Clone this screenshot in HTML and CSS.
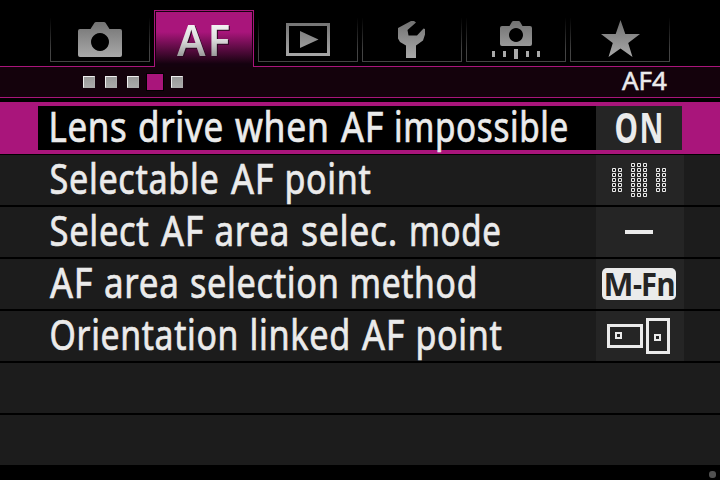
FILE: index.html
```html
<!DOCTYPE html>
<html lang="en">
<head>
<meta charset="utf-8">
<title>AF4</title>
<link rel="stylesheet" href="styles.css">
</head>
<body>
<svg width="0" height="0" class="defs">
  <defs>
    <linearGradient id="metal" gradientUnits="userSpaceOnUse" x1="0" y1="20" x2="0" y2="58"><stop offset="0" stop-color="#707070"/><stop offset="1" stop-color="#aaa"/></linearGradient>
    <linearGradient id="silver" gradientUnits="userSpaceOnUse" x1="0" y1="24" x2="0" y2="56"><stop offset="0" stop-color="#f4f4f4"/><stop offset=".5" stop-color="#dcdcdc"/><stop offset="1" stop-color="#999"/></linearGradient>
    <pattern id="pts" width="6" height="5" patternUnits="userSpaceOnUse"><path d="M.5.5h3v3h-3z" fill="none" stroke="#ebebeb"/></pattern>
  </defs>
</svg>
<main class="screen">
  <nav class="tabs">
    <div class="tab"><svg viewBox="50 0 100 62"><path fill="url(#metal)" fill-rule="evenodd" d="M80 29h10.500l4-6.200q.6-.8 1.500-.8h8q.9 0 1.500.8l4 6.200h10.500q2 0 2 2v24q0 2-2 2h-40q-2 0-2-2v-24q0-2 2-2zM100 33a9 9 0 1 0 .01 0z"/></svg></div>
    <div class="tab active"><svg viewBox="156 12 97 54"><text class="af" y="56"><tspan x="177" textLength="55.500" lengthAdjust="spacingAndGlyphs">AF</tspan></text></svg></div>
    <div class="tab"><svg viewBox="258 0 100 62"><path fill="url(#metal)" fill-rule="evenodd" d="M286 23h44v33h-44zM289 26v27h38V26z"/><path fill="url(#metal)" d="M300 31l18.500 8.500L300 48z"/></svg></div>
    <div class="tab"><svg viewBox="362 0 100 62"><path fill="url(#metal)" d="M411 21h3l2 1.500-8.500 7.500 1 5.500h8.500l6.500-7 1.500.5v5.500l-2 6-7 5V58h-10V45.500l-6-3.500-2-3.500V28z"/></svg></div>
    <div class="tab"><svg viewBox="466 0 100 62"><path fill="url(#metal)" fill-rule="evenodd" d="M502 26h7.500l2.500-4.300q.5-.7 1.300-.7h5.400q.8 0 1.300.7l2.500 4.300h7.500q2 0 2 2v16q0 2-2 2h-28q-2 0-2-2V28q0-2 2-2zM516 28a7 7 0 1 0 .01 0z"/><path fill="#aaa" d="M492 51h3v6h-3zM503 51h3v6h-3zM514 49h4v10h-4zM526 51h3v6h-3zM537 51h3v6h-3z"/></svg></div>
    <div class="tab"><svg viewBox="570 0 100 62"><path fill="url(#metal)" d="M620.500 20l4.800 14H640l-11.800 9 4.300 14-12-8.500-12 8.500 4.300-14L601 34h14.700z"/></svg></div>
  </nav>
  <header class="pagebar">
    <div class="pages"><i></i><i></i><i></i><i class="current"></i><i></i></div>
    <svg class="pagename" viewBox="620 67 50 30"><text y="90"><tspan x="622" textLength="45" lengthAdjust="spacingAndGlyphs">AF4</tspan></text></svg>
  </header>
  <section class="menu">
    <div class="row selected">
      <svg class="label" viewBox="38 0 558 44"><text y="36"><tspan x="48.500" textLength="79" lengthAdjust="spacingAndGlyphs">Lens</tspan> <tspan x="138" textLength="86" lengthAdjust="spacingAndGlyphs">drive</tspan> <tspan x="235" textLength="94.500" lengthAdjust="spacingAndGlyphs">when</tspan> <tspan x="341" textLength="43" lengthAdjust="spacingAndGlyphs">AF</tspan> <tspan x="394" textLength="175" lengthAdjust="spacingAndGlyphs">impossible</tspan></text></svg>
      <div class="value"><svg viewBox="596 0 86 44"><text class="on" y="37"><tspan x="614.500" textLength="23.500" lengthAdjust="spacingAndGlyphs">O</tspan><tspan x="639.500" textLength="24" lengthAdjust="spacingAndGlyphs">N</tspan></text></svg></div>
    </div>
    <div class="row">
      <svg class="label" viewBox="38 0 558 50"><text y="39"><tspan x="49.500" textLength="170" lengthAdjust="spacingAndGlyphs">Selectable</tspan> <tspan x="231" textLength="43" lengthAdjust="spacingAndGlyphs">AF</tspan> <tspan x="284.500" textLength="87" lengthAdjust="spacingAndGlyphs">point</tspan></text></svg>
      <div class="value"><svg viewBox="596 0 88 50"><g fill="url(#pts)"><path transform="translate(612 13)" d="M0 0h11v25H0z"/><path transform="translate(631 8)" d="M0 0h17v35H0z"/><path transform="translate(656 13)" d="M0 0h11v25H0z"/></g></svg></div>
    </div>
    <div class="row">
      <svg class="label" viewBox="38 0 558 50"><text y="39"><tspan x="49.500" textLength="100" lengthAdjust="spacingAndGlyphs">Select</tspan> <tspan x="161" textLength="43" lengthAdjust="spacingAndGlyphs">AF</tspan> <tspan x="214.500" textLength="75.500" lengthAdjust="spacingAndGlyphs">area</tspan> <tspan x="301" textLength="97" lengthAdjust="spacingAndGlyphs">selec.</tspan> <tspan x="409" textLength="92.500" lengthAdjust="spacingAndGlyphs">mode</tspan></text></svg>
      <div class="value"><svg viewBox="596 0 88 50"><path class="ink" d="M625 23h28v4h-28z"/></svg></div>
    </div>
    <div class="row">
      <svg class="label" viewBox="38 0 558 50"><text y="39"><tspan x="50" textLength="43" lengthAdjust="spacingAndGlyphs">AF</tspan> <tspan x="104" textLength="75.500" lengthAdjust="spacingAndGlyphs">area</tspan> <tspan x="190" textLength="149.500" lengthAdjust="spacingAndGlyphs">selection</tspan> <tspan x="349.500" textLength="128.500" lengthAdjust="spacingAndGlyphs">method</tspan></text></svg>
      <div class="value"><svg viewBox="596 0 88 50"><rect class="ink" x="602" y="9" width="74" height="32" rx="5"/><text class="mfn" y="37"><tspan x="603.500" textLength="30" lengthAdjust="spacingAndGlyphs">M</tspan><tspan x="633" textLength="9" lengthAdjust="spacingAndGlyphs">-</tspan><tspan x="641" textLength="16" lengthAdjust="spacingAndGlyphs">F</tspan><tspan x="656.500" textLength="19" lengthAdjust="spacingAndGlyphs">n</tspan></text></svg></div>
    </div>
    <div class="row">
      <svg class="label" viewBox="38 0 558 50"><text y="39"><tspan x="49.500" textLength="189.500" lengthAdjust="spacingAndGlyphs">Orientation</tspan> <tspan x="249.500" textLength="101.500" lengthAdjust="spacingAndGlyphs">linked</tspan> <tspan x="362" textLength="43" lengthAdjust="spacingAndGlyphs">AF</tspan> <tspan x="415.500" textLength="87" lengthAdjust="spacingAndGlyphs">point</tspan></text></svg>
      <div class="value"><svg viewBox="596 0 88 50"><g fill="none" stroke="#ebebeb"><path stroke-width="3" d="M608.500 14.500h33v21h-33zM647.500 8.500h21v33h-21z"/><path stroke-width="2" d="M616 22h5v5h-5zM655 24h5v5h-5z"/></g></svg></div>
    </div>
    <div class="row"></div>
    <div class="row"></div>
  </section>
  <footer class="foot"><span class="dot"></span></footer>
</main>
</body>
</html>
```
FILE: styles.css
```css
* { box-sizing: border-box; }
body { margin: 0; background: #000; }
.defs { display: block; height: 0; }
.screen {
  width: 720px;
  height: 480px;
  background: #000;
  overflow: hidden;
  font-family: "Noto Sans", "Open Sans", sans-serif;
}
svg { display: block; overflow: visible; }

.tabs {
  display: grid;
  grid-template-columns: repeat(6, 100px);
  column-gap: 4px;
  height: 67px;
  padding-left: 50px;
  border-bottom: 1px solid #a9157b;
}
.tab { position: relative; height: 62px; }
.tab::after {
  content: "";
  position: absolute;
  inset: 18px 0 0;
  border: 1px solid;
  border-top: 0;
  border-image: linear-gradient(#000, #444 75%) 1;
}
.tab svg { width: 100px; height: 62px; }
.tab.active {
  height: 57px;
  margin-top: 10px;
  border: 1px solid #a9157b;
  border-bottom: 0;
  padding: 1px 1px 0;
  background: linear-gradient(#a9157b 0, #a9157b 20px, #14020e 52px) content-box, #14020e;
}
.tab.active::after { content: none; }
.tab.active svg { width: 97px; height: 54px; }
.af {
  font-size: 43px;
  font-weight: 600;
  letter-spacing: 2px;
  fill: url(#silver);
  filter: drop-shadow(1px 1px 0 #2a0820);
}

.pagebar {
  display: flex;
  justify-content: space-between;
  height: 31px;
  padding: 0 50px 0 83px;
  background: #14020c;
  border-bottom: 1px solid #a9157b;
}
.pages { display: flex; align-items: center; gap: 10px; }
.pages i {
  width: 12px;
  height: 12px;
  background: linear-gradient(#999, #aaa);
  border: 1px solid;
  border-color: #eee #aaa #aaa #eee;
}
.pages i.current {
  width: 16px;
  height: 16px;
  margin: 0 -2px;
  background: #a9157b;
  border: 0;
  outline: 1px solid #000;
}
.pagename { width: 50px; height: 30px; }
.pagename text { font-size: 25px; fill: #ebebeb; stroke: #ebebeb; stroke-width: .5; }

.menu { margin-top: 4px; }
.row {
  display: flex;
  height: 52px;
  padding-left: 38px;
  background: #1c1c1c;
  border-bottom: 2px solid #000;
}
.row.selected {
  height: 53px;
  padding: 4px 38px 4px;
  background: #a9157b;
  border-bottom-width: 1px;
}
.label {
  width: 558px;
  height: 50px;
  fill: #ebebeb;
  stroke: #ebebeb;
  stroke-width: .7;
  font-size: 41px;
  letter-spacing: .8px;
}
.value { width: 88px; height: 50px; background: #252525; }
.value svg { width: 88px; height: 50px; }
.selected .label { height: 44px; background: #000; }
.selected .value, .selected .value svg { width: 86px; height: 44px; }
.ink { fill: #ebebeb; }
.on { font-size: 41px; font-weight: 700; fill: #ebebeb; }
.mfn { font-size: 33px; font-weight: 700; fill: #252525; }

.foot { display: flex; justify-content: flex-end; padding: 4px 4px 0 0; }
.dot { width: 7px; height: 7px; border-radius: 3px; background: #505050; }
```
